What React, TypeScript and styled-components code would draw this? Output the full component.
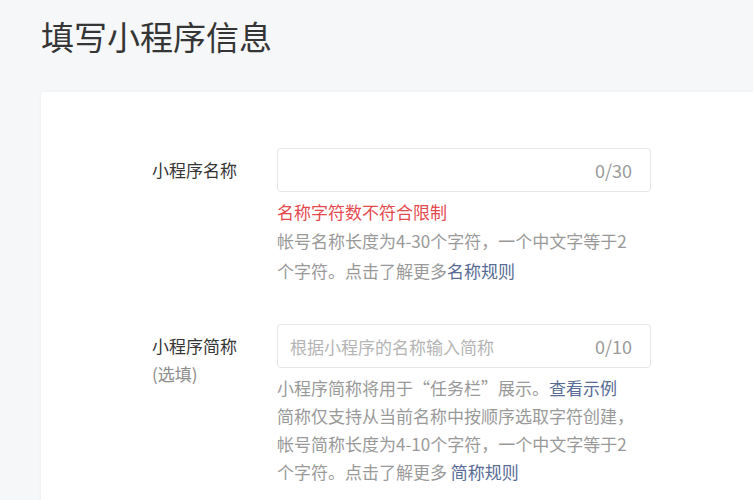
import styled, { createGlobalStyle } from 'styled-components';

const GlobalStyle = createGlobalStyle`
  html, body {
    margin: 0;
    padding: 0;
    background: #f6f7f9;
    overflow: hidden;
  }
  body {
    font-family: "Noto Sans CJK SC", "Noto Sans", sans-serif;
    color: #353535;
  }
`;

const Page = styled.main`
  padding: 14px 0 0 41px;
`;

const Title = styled.h1`
  margin: 0;
  font-size: 33px;
  font-weight: 400;
  line-height: 44px;
  color: #353535;
`;

const Card = styled.section`
  margin-top: 34px;
  width: 760px;
  min-height: 420px;
  background: #fff;
  border-radius: 4px;
  box-shadow: 0 0 3px rgba(0, 0, 0, 0.06);
  padding: 56px 0 0 111px;
  box-sizing: border-box;
`;

const Form = styled.div`
  display: flex;
  flex-direction: column;
  gap: 38px;
`;

const Row = styled.div`
  display: grid;
  grid-template-columns: 125px 374px;
  align-items: start;
`;

const Label = styled.div`
  padding-top: 8px;
  font-size: 17px;
  line-height: 28px;
  color: #353535;
`;

const Optional = styled.div`
  color: #8c8c8c;
`;

const Field = styled.div`
  display: flex;
  flex-direction: column;
`;

const InputBox = styled.div`
  display: flex;
  align-items: center;
  height: 44px;
  box-sizing: border-box;
  border: 1px solid #e5e6ea;
  border-radius: 4px;
  padding: 0 18px 0 12px;
  margin-bottom: 6px;
`;

const Input = styled.input`
  flex: 1;
  min-width: 0;
  border: none;
  outline: none;
  background: transparent;
  font-family: inherit;
  font-size: 17px;
  color: #353535;
  padding: 0;
  &::placeholder {
    color: #b4b4b4;
  }
`;

const Counter = styled.span`
  font-size: 18px;
  color: #9a9a9a;
`;

const Error = styled.div`
  font-size: 17px;
  line-height: 28px;
  color: #e5484d;
`;

const Help = styled.div<{ $lh: number }>`
  max-width: 362px;
  font-size: 17px;
  line-height: ${(p) => p.$lh}px;
  color: #999;
`;

const Link = styled.a`
  color: #576b95;
  text-decoration: none;
  cursor: pointer;
`;

export default function App() {
  return (
    <>
      <GlobalStyle />
      <Page>
        <Title>填写小程序信息</Title>
        <Card>
          <Form>
            <Row>
              <Label>小程序名称</Label>
              <Field>
                <InputBox>
                  <Input />
                  <Counter>0/30</Counter>
                </InputBox>
                <Error>名称字符数不符合限制</Error>
                <Help $lh={30}>
                  帐号名称长度为4-30个字符，一个中文字等于2个字符。点击了解更多<Link>名称规则</Link>
                </Help>
              </Field>
            </Row>
            <Row>
              <Label>
                小程序简称
                <Optional>(选填)</Optional>
              </Label>
              <Field>
                <InputBox>
                  <Input placeholder="根据小程序的名称输入简称" />
                  <Counter>0/10</Counter>
                </InputBox>
                <Help $lh={28}>
                  小程序简称将用于“任务栏”展示。<Link>查看示例</Link>
                  <br />
                  简称仅支持从当前名称中按顺序选取字符创建，帐号简称长度为4-10个字符，一个中文字等于2个字符。点击了解更多 <Link>简称规则</Link>
                </Help>
              </Field>
            </Row>
          </Form>
        </Card>
      </Page>
    </>
  );
}
